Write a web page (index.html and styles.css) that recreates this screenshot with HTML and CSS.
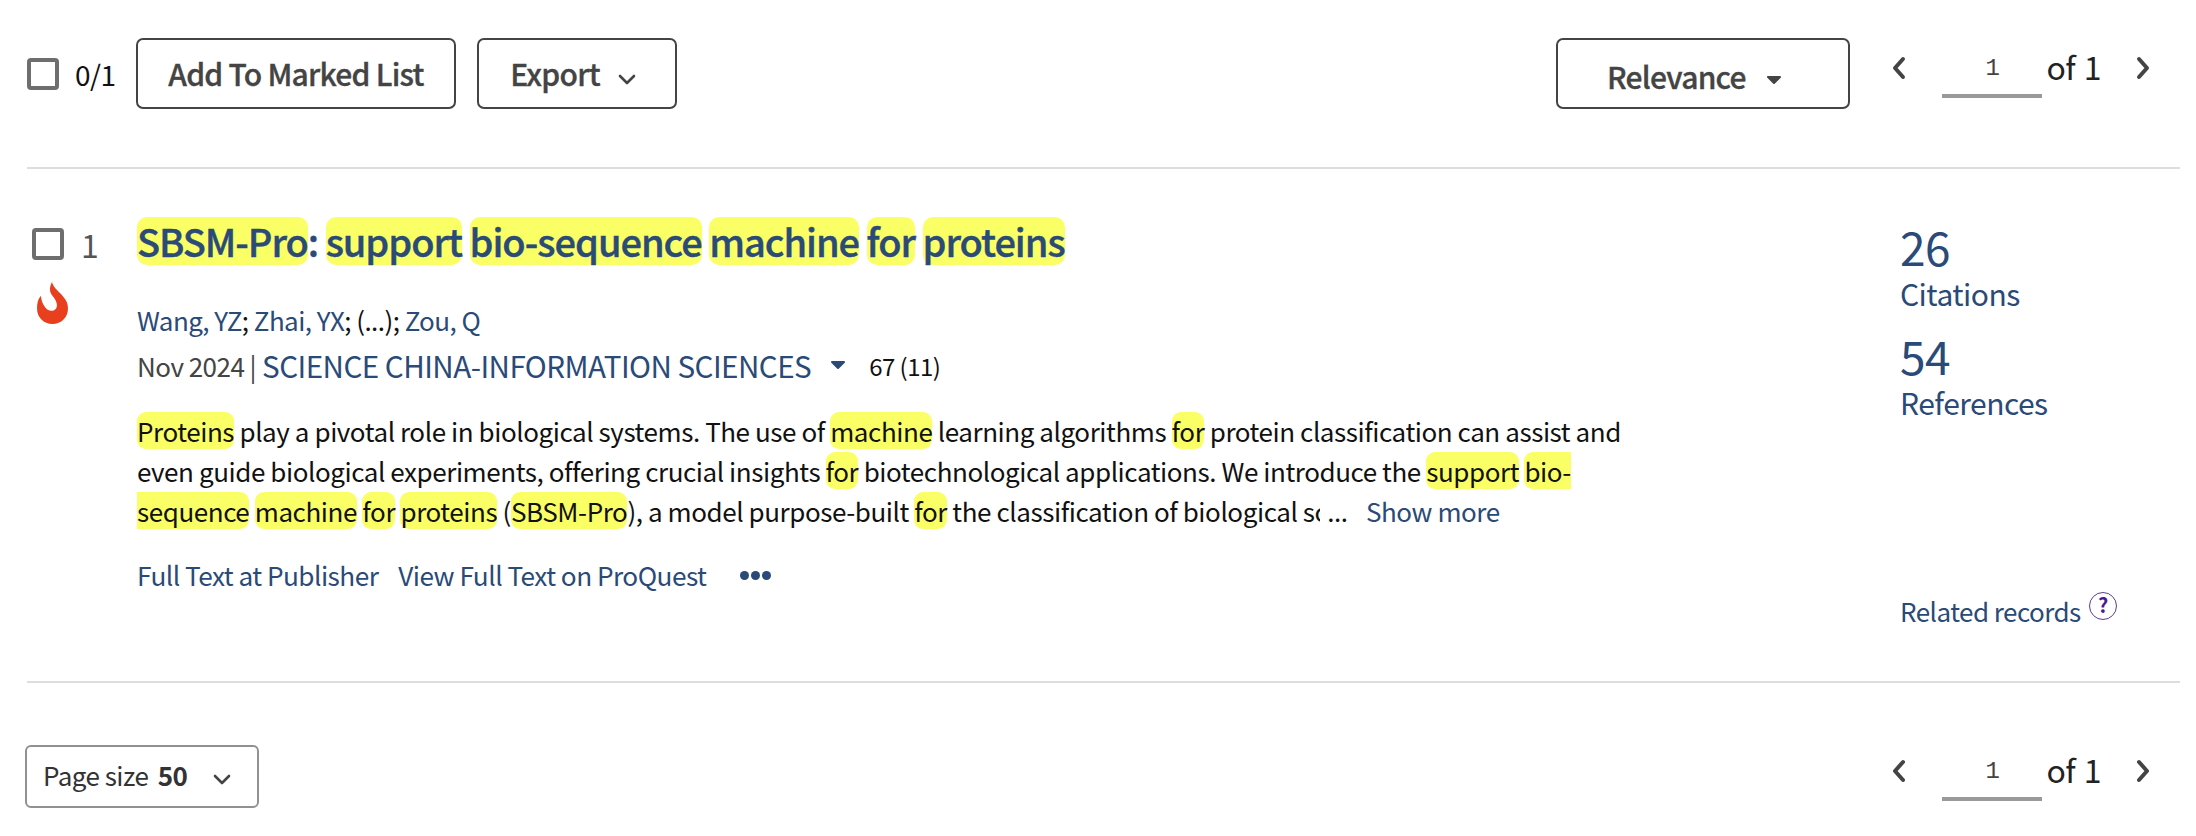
FILE: index.html

```html
<!DOCTYPE html>
<html lang="en">
<head>
  <meta charset="UTF-8" />
  <title>Search results</title>
  <link rel="stylesheet" href="styles.css">
</head>
<body>
  <div class="toolbar">
    <span class="checkbox"></span>
    <span class="count">0/1</span>
    <button class="btn btn-mark">Add To Marked List</button>
    <button class="btn btn-export">Export
      <svg class="chev" viewBox="0 0 18 12" width="18" height="12"><path d="M2 2l7 7 7-7" /></svg>
    </button>
    <button class="btn btn-sort">Relevance
      <svg class="caret" viewBox="0 0 16 10" width="16" height="10"><path d="M2 2h12L8 8z" /></svg>
    </button>
    <div class="pager">
      <svg class="arrow" viewBox="0 0 14 24" width="14" height="24"><path d="M11 3l-8 9 8 9" /></svg>
      <span class="page-input">1</span>
      <span class="of">of 1</span>
      <svg class="arrow" viewBox="0 0 14 24" width="14" height="24"><path d="M3 3l8 9-8 9" /></svg>
    </div>
  </div>

  <div class="record">
    <div class="gutter">
      <div class="gutter-top">
        <span class="checkbox"></span>
        <span class="num">1</span>
      </div>
      <svg class="flame" viewBox="0 0 28 38" width="33" height="42">
        <path d="M13.5 0C15 6 21 9 25 15c2 3 3 5 3 9 0 8-6 14-14 14S0 32 0 24c0-5 1-9 3.500-11.500C4 17 5 20 7.500 23c1.500 2 3.500 3 5.500 3 3 0 5-2 5-5 0-4-3-7-5-10-2-3-1.500-7 .5-11z" />
      </svg>
    </div>

    <div class="main">
      <h2 class="title"><mark>SBSM-Pro</mark>: <mark>support</mark> <mark>bio-sequence</mark> <mark>machine</mark> <mark>for</mark> <mark>proteins</mark></h2>
      <div class="authors"><a>Wang, YZ</a>; <a>Zhai, YX</a>; (...); <a>Zou, Q</a></div>
      <div class="source">
        <span class="date">Nov 2024 |</span>
        <a class="journal">SCIENCE CHINA-INFORMATION SCIENCES</a>
        <svg class="caret caret-blue" viewBox="0 0 16 10" width="16" height="10"><path d="M2 2h12L8 8z" /></svg>
        <span class="vol">67 (11)</span>
      </div>
      <p class="abstract"><mark>Proteins</mark> play a pivotal role in biological systems. The use of <mark>machine</mark> learning algorithms <mark>for</mark> protein classification can assist and<br>
      even guide biological experiments, offering crucial insights <mark>for</mark> biotechnological applications. We introduce the <mark>support</mark> <mark class="open-end">bio-</mark><br>
      <mark class="open-start">sequence</mark> <mark>machine</mark> <mark>for</mark> <mark>proteins</mark> (<mark>SBSM-Pro</mark>), a model purpose-built <mark>for</mark> the classification of biological <span class="cut">sc</span> ... <a class="more">Show more</a></p>
      <div class="links">
        <a>Full Text at Publisher</a>
        <a>View Full Text on ProQuest</a>
        <span class="dots"><i></i><i></i><i></i></span>
      </div>
    </div>

    <div class="side">
      <div class="stat-num">26</div>
      <div class="stat-label">Citations</div>
      <div class="stat-num stat-second">54</div>
      <div class="stat-label">References</div>
      <div class="related">Related records <span class="help">?</span></div>
    </div>
  </div>

  <div class="footer">
    <button class="btn-size">Page size <b>50</b>
      <svg class="chev" viewBox="0 0 18 12" width="18" height="12"><path d="M2 2l7 7 7-7" /></svg>
    </button>
    <div class="pager">
      <svg class="arrow" viewBox="0 0 14 24" width="14" height="24"><path d="M11 3l-8 9 8 9" /></svg>
      <span class="page-input">1</span>
      <span class="of">of 1</span>
      <svg class="arrow" viewBox="0 0 14 24" width="14" height="24"><path d="M3 3l8 9-8 9" /></svg>
    </div>
  </div>
</body>
</html>
```

FILE: styles.css

```css
body {
  margin: 0;
  background: #fff;
  color: #111;
  font-family: "Noto Sans CJK SC", "Source Sans Pro", "Open Sans", sans-serif;
  font-size: 26px;
  line-height: 40px;
  letter-spacing: -0.53px;
}
a {
  color: #2a4a77;
}
mark {
  background: #fbff66;
  color: inherit;
  border-radius: 9px;
}
mark.open-end {
  border-radius: 9px 0 0 9px;
}
mark.open-start {
  border-radius: 0 9px 9px 0;
}

/* top bar */
.toolbar {
  display: flex;
  align-items: center;
  margin: 0 16px 0 27px;
  padding: 38px 0 58px;
  border-bottom: 2px solid #ddd;
}
.checkbox {
  display: block;
  box-sizing: border-box;
  width: 32px;
  height: 32px;
  border: 4px solid #6e6e6e;
  border-radius: 4px;
  flex: none;
}
.count {
  margin-left: 16px;
  width: 44px;
  font-size: 28px;
}
.btn {
  box-sizing: border-box;
  height: 71px;
  background: #fff;
  border: 2px solid #444;
  border-radius: 7px;
  color: #444;
  font: 500 30px/40px "Noto Sans CJK SC", sans-serif;
  letter-spacing: -0.75px;
  -webkit-text-stroke: 0.35px #444;
  padding: 0 0 2px;
}
.btn-mark {
  width: 320px;
  margin-left: 17px;
}
.btn-export {
  width: 200px;
  margin-left: 21px;
  padding-right: 8px;
}
.btn-export .chev {
  margin-left: 12px;
}
.btn-sort {
  width: 294px;
  margin-left: auto;
  padding: 4px 18px 0 0;
}
.chev {
  fill: none;
  stroke: #444;
  stroke-width: 2.6;
  stroke-linecap: round;
  stroke-linejoin: round;
}
.caret {
  margin-left: 14px;
  fill: #444;
  stroke: #444;
  stroke-width: 2;
  stroke-linejoin: round;
  vertical-align: 4px;
}

/* pager */
.pager {
  box-sizing: border-box;
  display: flex;
  align-items: center;
  margin-left: 42px;
  padding: 0 30px 6px 0;
  height: 71px;
}
.arrow {
  margin-top: -6px;
  fill: none;
  stroke: #444;
  stroke-width: 4;
  stroke-linecap: round;
  stroke-linejoin: round;
}
.page-input {
  box-sizing: border-box;
  width: 100px;
  height: 54px;
  margin-left: 36px;
  border-bottom: 4px solid #999;
  color: #444;
  font-size: 24px;
  line-height: 50px;
  text-align: center;
  font-family: "Liberation Mono", monospace;
}
.of {
  margin: -10px 35px 0 4px;
  font-size: 32px;
  word-spacing: 2px;
  white-space: nowrap;
  color: #222;
}

/* record row */
.record {
  display: flex;
  margin: 0 16px 0 27px;
  height: 512px;
  border-bottom: 2px solid #ddd;
}
.gutter {
  width: 110px;
  flex: none;
  padding-top: 55px;
}
.gutter-top {
  display: flex;
  align-items: center;
  padding-left: 5px;
}
.num {
  margin-left: 17px;
  font-size: 32px;
  color: #555;
}
.flame {
  display: block;
  margin: 18px 0 0 9px;
  fill: #e8401f;
}
.main {
  flex: 1;
  padding-top: 48px;
}
.title {
  margin: 0;
  color: #2a4a77;
  font-size: 38px;
  font-weight: 500;
  line-height: 48px;
  letter-spacing: -1.04px;
  -webkit-text-stroke: 0.4px #2a4a77;
}
.title mark {
  display: inline-block;
  height: 48px;
  border-radius: 10px;
}
.authors {
  margin-top: 35px;
  color: #111;
  letter-spacing: -0.56px;
}
.source {
  display: flex;
  align-items: center;
  margin-top: 6px;
}
.date {
  color: #444;
}
.journal {
  margin-left: 6px;
  font-size: 29.600px;
}
.caret-blue {
  fill: #2a4a77;
  stroke: #2a4a77;
  margin-left: 19px;
  margin-top: -2px;
}
.vol {
  margin-left: 23px;
  font-size: 24px;
}
.abstract {
  margin: 25px 0 0;
  letter-spacing: -0.43px;
}
.cut {
  display: inline-block;
  width: 17px;
  margin-right: 2px;
  overflow: clip;
  white-space: nowrap;
}
.more {
  margin-left: 13px;
}
.links {
  display: flex;
  align-items: center;
  margin-top: 24px;
  font-size: 26.200px;
}
.links a + a {
  margin-left: 20px;
}
.dots {
  display: flex;
  gap: 2px;
  margin-left: 34px;
}
.dots i {
  width: 9px;
  height: 9px;
  border-radius: 50%;
  background: #2a4a77;
}

/* right column */
.side {
  display: flex;
  flex-direction: column;
  width: 280px;
  flex: none;
  padding: 52px 0 50px;
  color: #2a4a77;
}
.stat-num {
  font-size: 46px;
  line-height: 50px;
}
.stat-second {
  margin-top: 17px;
}
.stat-label {
  margin-top: 2px;
  font-size: 30px;
}
.related {
  margin-top: auto;
  font-size: 26px;
  white-space: nowrap;
}
.help {
  display: inline-block;
  box-sizing: border-box;
  width: 28px;
  height: 28px;
  margin-left: 3px;
  border: 1px solid #5b3d8f;
  border-radius: 50%;
  color: #4b1a91;
  font-size: 20px;
  font-weight: 700;
  line-height: 24px;
  text-align: center;
  vertical-align: 9px;
  letter-spacing: 0;
}

/* bottom bar */
.footer {
  display: flex;
  align-items: flex-start;
  justify-content: space-between;
  margin: 0 16px 0 25px;
  padding-top: 62px;
}
.btn-size {
  box-sizing: border-box;
  width: 234px;
  height: 63px;
  background: #fff;
  border: 2px solid #919191;
  border-radius: 6px;
  color: #333;
  font: 400 26px/40px "Noto Sans CJK SC", sans-serif;
  letter-spacing: -0.53px;
  padding: 0 0 4px 16px;
  text-align: left;
}
.btn-size b {
  margin-left: 4px;
  font-weight: 600;
}
.btn-size .chev {
  margin-left: 20px;
}
.footer .pager {
  height: 63px;
}
```
